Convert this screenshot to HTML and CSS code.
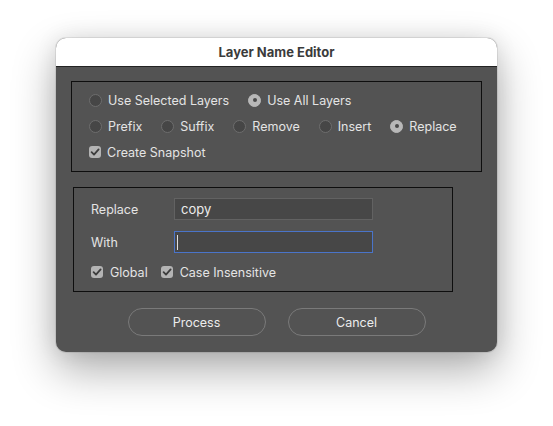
FILE: index.html
```html
<!DOCTYPE html>
<html>
<head>
<meta charset="utf-8">
<link rel="stylesheet" href="styles.css">
</head>
<body>
<div class="window">
  <div class="titlebar">Layer Name Editor</div>
  <div class="content">
    <div class="group group-scope">
      <div class="row">
        <label class="opt"><span class="radio"></span>Use Selected Layers</label>
        <label class="opt"><span class="radio on"></span>Use All Layers</label>
      </div>
      <div class="row">
        <label class="opt"><span class="radio"></span>Prefix</label>
        <label class="opt"><span class="radio"></span>Suffix</label>
        <label class="opt"><span class="radio"></span>Remove</label>
        <label class="opt"><span class="radio"></span>Insert</label>
        <label class="opt"><span class="radio on"></span>Replace</label>
      </div>
      <div class="row">
        <label class="opt"><span class="check"><svg viewBox="0 0 12 12"><path d="M2.6 6.2 L5 8.6 L9.6 3.4" /></svg></span>Create Snapshot</label>
      </div>
    </div>
    <div class="group group-fields">
      <div class="field">
        <span class="flabel">Replace</span>
        <div class="input">copy</div>
      </div>
      <div class="field">
        <span class="flabel">With</span>
        <div class="input focus"><span class="caret"></span></div>
      </div>
      <div class="row checks">
        <label class="opt"><span class="check"><svg viewBox="0 0 12 12"><path d="M2.6 6.2 L5 8.6 L9.6 3.4" /></svg></span>Global</label>
        <label class="opt"><span class="check"><svg viewBox="0 0 12 12"><path d="M2.6 6.2 L5 8.6 L9.6 3.4" /></svg></span>Case Insensitive</label>
      </div>
    </div>
    <div class="buttons">
      <button class="btn">Process</button>
      <button class="btn">Cancel</button>
    </div>
  </div>
</div>
</body>
</html>
```
FILE: styles.css
```css
html, body {
  margin: 0;
  padding: 0;
  background: #ffffff;
}
body {
  width: 553px;
  height: 426px;
  overflow: hidden;
  font-family: "Inter", "Liberation Sans", Arial, sans-serif;
  font-size: 12.5px;
}
.window {
  margin: 38px 0 0 56px;
  width: 441px;
  height: 314px;
  border-radius: 10px;
  overflow: hidden;
  background: #535353;
  box-shadow: 0 0 0 1px rgba(0,0,0,0.08), 0 18px 44px rgba(0,0,0,0.32), 0 0 22px rgba(0,0,0,0.09);
  display: flex;
  flex-direction: column;
}
.titlebar {
  height: 28px;
  background: #ffffff;
  border-bottom: 1px solid #232323;
  color: #3b3b3b;
  font-weight: 700;
  font-size: 13px;
  display: flex;
  align-items: center;
  justify-content: center;
}
.content {
  flex: 1;
  display: flex;
  flex-direction: column;
  align-items: flex-start;
  padding: 14px 15px 0 15px;
  color: #e4e4e4;
}
.group {
  border: 1px solid #0e0e0e;
  box-sizing: border-box;
}
.group-scope {
  width: 411px;
  height: 91px;
  padding: 5px 0 0 17px;
  display: flex;
  flex-direction: column;
}
.row {
  display: flex;
  align-items: center;
  height: 26px;
  gap: 19px;
}
.opt {
  display: flex;
  align-items: center;
  gap: 6px;
  white-space: nowrap;
}
.radio {
  width: 11px;
  height: 11px;
  border-radius: 50%;
  background: #464646;
  border: 1px solid #6d6d6d;
  position: relative;
  flex: none;
}
.radio.on {
  background: #b8b8b8;
  border-color: #b8b8b8;
}
.radio.on::after {
  content: "";
  position: absolute;
  left: 3.5px;
  top: 3.5px;
  width: 4px;
  height: 4px;
  border-radius: 50%;
  background: #4a4a4a;
}
.check {
  width: 12px;
  height: 12px;
  border-radius: 3px;
  background: #b4b4b4;
  flex: none;
  display: flex;
}
.check svg {
  width: 12px;
  height: 12px;
}
.check path {
  fill: none;
  stroke: #3e3e3e;
  stroke-width: 1.8;
  stroke-linecap: round;
  stroke-linejoin: round;
}
.group-fields {
  margin: 15px 0 0 2px;
  width: 380px;
  height: 105px;
  padding: 10px 0 0 17px;
  display: flex;
  flex-direction: column;
}
.field {
  display: flex;
  align-items: center;
  height: 22px;
  margin-bottom: 11px;
}
.flabel {
  width: 83px;
  flex: none;
}
.input {
  width: 199px;
  height: 22px;
  box-sizing: border-box;
  background: #474747;
  border: 1px solid #626262;
  padding: 0 6px;
  display: flex;
  align-items: center;
  color: #ececec;
  font-size: 13px;
}
.input.focus {
  border-color: #4a74c9;
  padding-left: 2px;
}
.caret {
  width: 1px;
  height: 15px;
  background: #e0e0e0;
}
.checks {
  margin-top: -5px;
  gap: 13px;
}
.checks .opt {
  gap: 7px;
}
.buttons {
  align-self: center;
  display: flex;
  gap: 22px;
  margin-top: 16px;
}
.btn {
  width: 138px;
  height: 28px;
  border-radius: 14px;
  border: 1px solid #7a7a7a;
  background: transparent;
  color: #ececec;
  font-family: inherit;
  font-size: 12.5px;
  padding: 0;
}
```
